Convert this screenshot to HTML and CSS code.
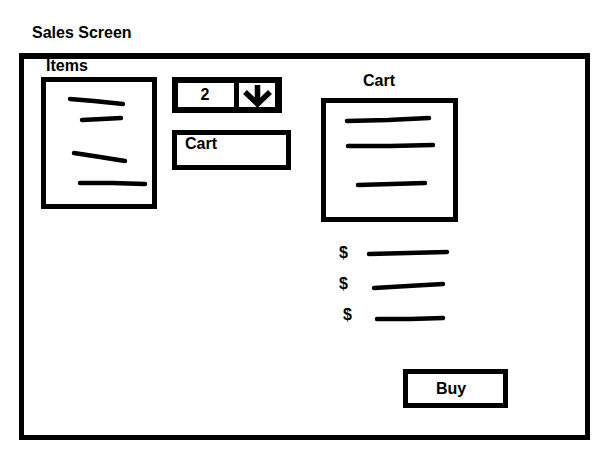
FILE: index.html
```html
<!DOCTYPE html>
<html lang="en">
<head>
    <meta charset="UTF-8">
    <meta name="viewport" content="width=device-width, initial-scale=1.0">
    <title>Sales Screen</title>
    <link rel="stylesheet" href="styles.css">
</head>
<body>
    <h1 class="title">Sales Screen</h1>

    <div class="frame">
        <!-- Items list -->
        <div class="col col-items">
            <div class="label items-label">Items</div>
            <div class="box items-box">
                <svg class="scribble" width="106" height="122" viewBox="0 0 106 122">
                    <polyline points="24,17 48,19 77,22"/>
                    <polyline points="36,38 56,37 75,36"/>
                    <polyline points="28,71 54,75 79,79"/>
                    <polyline points="34,101 66,101 99,102"/>
                </svg>
            </div>
        </div>

        <!-- Quantity + add to cart -->
        <div class="col col-qty">
            <div class="qty">
                <span class="qty-value">2</span>
                <span class="qty-arrow">
                    <svg width="36" height="24" viewBox="0 0 36 24">
                        <line x1="18.5" y1="2" x2="18.5" y2="19"/>
                        <polyline points="6,9 18.5,21 31,9"/>
                    </svg>
                </span>
            </div>
            <button type="button" class="btn cart-btn">Cart</button>
        </div>

        <!-- Cart -->
        <div class="col col-cart">
            <div class="label cart-label">Cart</div>
            <div class="box cart-box">
                <svg class="scribble" width="127" height="114" viewBox="0 0 127 114">
                    <polyline points="21,18 62,17 103,15"/>
                    <polyline points="22,43 64,43 107,42"/>
                    <polyline points="32,82 66,81 99,80"/>
                </svg>
            </div>

            <div class="totals">
                <div class="total-row">
                    <span class="dollar">$</span>
                    <svg class="scribble" width="90" height="18" viewBox="0 0 90 18">
                        <polyline points="5,10 44,9 83,8"/>
                    </svg>
                </div>
                <div class="total-row">
                    <span class="dollar">$</span>
                    <svg class="scribble" width="90" height="18" viewBox="0 0 90 18">
                        <polyline points="10,13 44,11 79,9"/>
                    </svg>
                </div>
                <div class="total-row">
                    <span class="dollar shift">$</span>
                    <svg class="scribble" width="90" height="18" viewBox="0 0 90 18">
                        <polyline points="13,13 46,13 79,12"/>
                    </svg>
                </div>
            </div>

            <button type="button" class="btn buy-btn">Buy</button>
        </div>
    </div>
</body>
</html>
```

FILE: styles.css
```css
/* Base */
body {
    margin: 0;
    font-family: "Liberation Sans", Arial, sans-serif;
    font-size: 16px;
    font-weight: bold;
    line-height: 18px;
    color: #000;
    background-color: #fff;
}

.title {
    font-size: 16px;
    line-height: 18px;
    margin: 24px 0 0 32px;
}

/* Outer frame */
.frame {
    box-sizing: border-box;
    width: 571px;
    height: 387px;
    margin: 11px 0 0 19px;
    border: 5px solid #000;
    border-top-width: 6px;
    padding-left: 17px;
    display: flex;
    align-items: flex-start;
}

.col {
    display: flex;
    flex-direction: column;
    align-items: flex-start;
}

.box {
    box-sizing: border-box;
    border: 5px solid #000;
}

.scribble polyline,
.qty-arrow line,
.qty-arrow polyline {
    fill: none;
    stroke: #000;
}

.scribble polyline {
    stroke-width: 4.5;
    stroke-linecap: round;
    stroke-linejoin: round;
}

.qty-arrow line,
.qty-arrow polyline {
    stroke-width: 5.5;
}

.scribble {
    display: block;
}

/* Items column */
.col-items {
    width: 116px;
}

.items-label {
    margin-top: -2px;
    padding-left: 5px;
}

.items-box {
    width: 116px;
    height: 132px;
    margin-top: 2px;
}

/* Quantity column */
.col-qty {
    width: 119px;
    margin-left: 15px;
    margin-top: 18px;
}

.qty {
    box-sizing: border-box;
    width: 110px;
    height: 36px;
    border: 6px solid #000;
    border-right-width: 7px;
    display: flex;
}

.qty-value {
    flex: 1;
    text-align: center;
    line-height: 24px;
    padding-right: 2px;
}

.qty-arrow {
    width: 36px;
    border-left: 5px solid #000;
}

.qty-arrow svg {
    display: block;
}

.btn {
    box-sizing: border-box;
    background-color: #fff;
    border: 5px solid #000;
    font: inherit;
    color: #000;
    text-align: left;
    cursor: pointer;
    margin: 0;
}

.cart-btn {
    width: 119px;
    height: 40px;
    margin-top: 17px;
    padding: 0 0 0 8px;
    display: flex;
    align-items: flex-start;
}

/* Cart column */
.col-cart {
    width: 187px;
    margin-left: 30px;
}

.cart-label {
    margin-top: 13px;
    padding-left: 42px;
}

.cart-box {
    width: 137px;
    height: 124px;
    margin-top: 8px;
}

.totals {
    margin-top: 22px;
    display: flex;
    flex-direction: column;
    gap: 13px;
}

.total-row {
    display: grid;
    grid-template-columns: 25px 90px;
    height: 18px;
    padding-left: 18px;
}

.dollar.shift {
    padding-left: 4px;
}

.buy-btn {
    width: 105px;
    height: 39px;
    margin-top: 45px;
    margin-left: 82px;
    padding: 0 0 0 28px;
    display: flex;
    align-items: center;
}
```
